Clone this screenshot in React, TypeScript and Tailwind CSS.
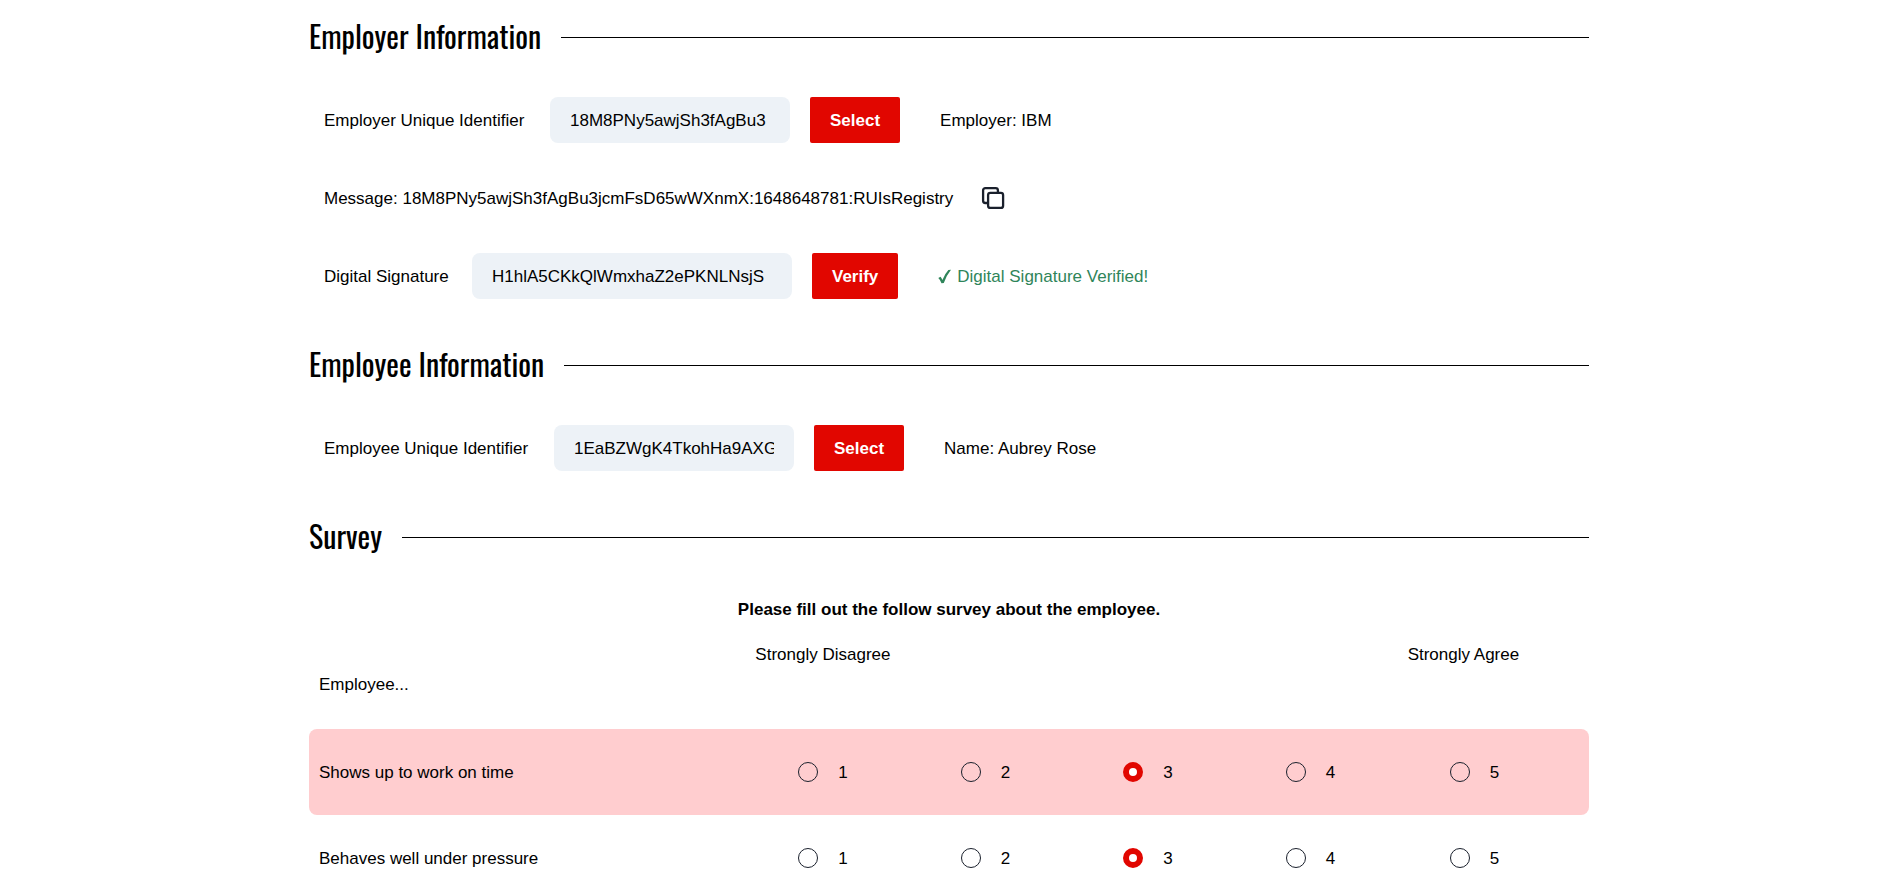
import { useState } from "react";
import type { ReactNode } from "react";

function SectionHeading({ children }: { children: ReactNode }) {
  return (
    <div className="mb-5 flex h-[47px] items-center gap-5">
      <h2 className="pb-1 font-['Oswald','Liberation_Sans_Narrow','Arial_Narrow',sans-serif] text-[30px] leading-[45px] whitespace-nowrap">
        {children}
      </h2>
      <div className="h-px flex-1 bg-black" />
    </div>
  );
}

function FieldRow({ children }: { children: ReactNode }) {
  return <div className="flex min-h-[78px] items-center px-[15px] py-4">{children}</div>;
}

type TextFieldProps = {
  id: string;
  label: string;
  initial: string;
  labelWidth: string;
  width: string;
};

function TextField({ id, label, initial, labelWidth, width }: TextFieldProps) {
  return (
    <>
      <label htmlFor={id} className={"mr-5 whitespace-nowrap " + labelWidth}>
        {label}
      </label>
      <input
        id={id}
        type="text"
        defaultValue={initial}
        className={"h-[46px] rounded-lg bg-[#edf2f7] px-5 pt-px outline-none " + width}
      />
    </>
  );
}

function ActionButton({ children }: { children: ReactNode }) {
  return (
    <button type="button" className="ml-5 h-[46px] rounded-xs bg-[#e10600] px-5 font-bold text-white">
      {children}
    </button>
  );
}

function CopyIcon() {
  return (
    <svg
      className="size-6"
      viewBox="0 0 24 24"
      fill="none"
      stroke="currentColor"
      strokeWidth="2.3"
      strokeLinejoin="round"
      strokeLinecap="round"
    >
      <rect x="7.1" y="6.9" width="15" height="15" rx="2.2" />
      <path d="M6.6 17H4.3a2.2 2.2 0 0 1-2.2-2.2V4.3a2.2 2.2 0 0 1 2.2-2.2h10.4a2.2 2.2 0 0 1 2.2 2.2V6.6" />
    </svg>
  );
}

function CheckIcon() {
  return (
    <svg className="h-[15px] w-[13px]" viewBox="0 0 13 15" fill="currentColor" aria-hidden="true">
      <path d="M0.3 9.1 2.5 7.7Q3.7 9.1 4.4 10.9 6.8 4.9 10.4 1L13 0.7Q8.4 6.4 5.8 13.9L3.5 14.3Q2.4 11.1 0.3 9.1Z" />
    </svg>
  );
}

const questions = ["Shows up to work on time", "Behaves well under pressure"];
const scores = [1, 2, 3, 4, 5];

function SurveyRow({ question, index }: { question: string; index: number }) {
  const [score, setScore] = useState(3);
  const shade = index % 2 === 0 ? "bg-[#ffcdcf]" : "";
  return (
    <tr className="h-[86px]">
      <th scope="row" className={"rounded-l-lg px-2.5 text-left font-normal " + shade}>
        {question}
      </th>
      {scores.map((n) => (
        <td key={n} className={"last:rounded-r-lg last:pr-8 " + shade}>
          <label className="flex items-center justify-center gap-5">
            <input
              type="radio"
              name={"question-" + index}
              checked={score === n}
              onChange={() => setScore(n)}
              className="size-5 appearance-none rounded-full border border-[#1a202c] checked:border-[6px] checked:border-[#e10600] checked:bg-white"
            />
            {n}
          </label>
        </td>
      ))}
    </tr>
  );
}

export default function App() {
  return (
    <div className="pl-1.5 font-['Liberation_Sans',Arial,sans-serif] text-[17px] leading-[27px] text-black">
      <main className="mx-auto flex max-w-7xl flex-col gap-[27px] pt-3.5">
        <section>
          <SectionHeading>Employer Information</SectionHeading>
          <FieldRow>
            <TextField
              id="employer-id"
              label="Employer Unique Identifier"
              initial="18M8PNy5awjSh3fAgBu3"
              labelWidth="w-[206px]"
              width="w-60"
            />
            <ActionButton>Select</ActionButton>
            <p className="ml-10">Employer: IBM</p>
          </FieldRow>
          <FieldRow>
            <p>Message: 18M8PNy5awjSh3fAgBu3jcmFsD65wWXnmX:1648648781:RUIsRegistry</p>
            <button type="button" aria-label="Copy message" className="ml-7 text-[#1a202c]">
              <CopyIcon />
            </button>
          </FieldRow>
          <FieldRow>
            <TextField
              id="signature"
              label="Digital Signature"
              initial="H1hlA5CKkQlWmxhaZ2ePKNLNsjS"
              labelWidth="w-[128px]"
              width="w-80"
            />
            <ActionButton>Verify</ActionButton>
            <p className="ml-10 flex items-center gap-1.5 text-[#2f855a]">
              <CheckIcon />
              Digital Signature Verified!
            </p>
          </FieldRow>
        </section>

        <section>
          <SectionHeading>Employee Information</SectionHeading>
          <FieldRow>
            <TextField
              id="employee-id"
              label="Employee Unique Identifier"
              initial="1EaBZWgK4TkohHa9AXGr"
              labelWidth="w-[210px]"
              width="w-60"
            />
            <ActionButton>Select</ActionButton>
            <p className="ml-10">Name: Aubrey Rose</p>
          </FieldRow>
        </section>

        <section>
          <SectionHeading>Survey</SectionHeading>
          <p className="mt-[35px] text-center font-bold">Please fill out the follow survey about the employee.</p>
          <table className="mt-[18px] w-full table-fixed border-separate border-spacing-0">
            <thead>
              <tr className="h-[88px]">
                <th scope="col" className="w-[33.8%] px-2.5 pt-[30px] text-left align-top font-normal">
                  Employee...
                </th>
                <th scope="col" className="w-[12.7%] align-top font-normal whitespace-nowrap">
                  Strongly Disagree
                </th>
                <td className="w-[12.7%]" />
                <td className="w-[12.7%]" />
                <td className="w-[12.7%]" />
                <th scope="col" className="pr-[54px] align-top font-normal whitespace-nowrap">
                  Strongly Agree
                </th>
              </tr>
            </thead>
            <tbody>
              {questions.map((q, i) => (
                <SurveyRow key={q} question={q} index={i} />
              ))}
            </tbody>
          </table>
        </section>
      </main>
    </div>
  );
}
